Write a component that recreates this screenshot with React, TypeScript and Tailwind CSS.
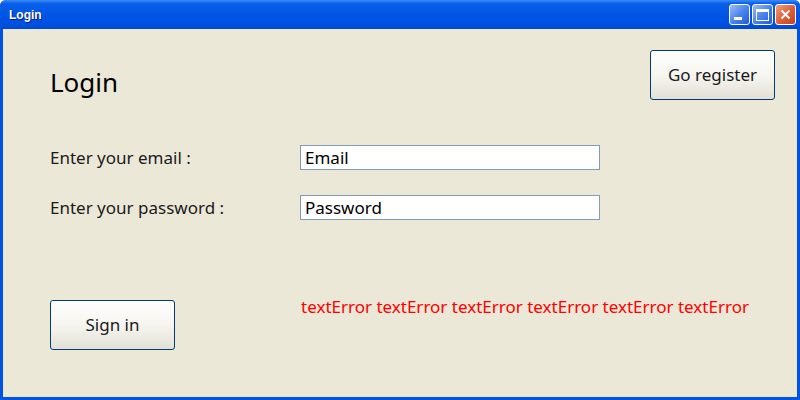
import React from 'react'

const fieldFont = { fontFamily: '"Noto Sans", "Open Sans", sans-serif' }

const XpButton = ({ label }: { label: string }) => (
  <button className="w-[125px] h-[50px] rounded-[3px] border border-[#003C74] bg-gradient-to-b from-white via-[#F6F5F0] to-[#E3E1D6] text-[17px] text-[#1b1b1b]">
    {label}
  </button>
)

const TitleButton = ({ kind }: { kind: 'min' | 'max' | 'close' }) => {
  const bg =
    kind === 'close'
      ? 'bg-gradient-to-br from-[#F0A080] via-[#E0603A] to-[#C9401D]'
      : 'bg-gradient-to-br from-[#9DBDF8] via-[#4C84EE] to-[#2458D6]'
  return (
    <div className={`w-[21px] h-[21px] rounded-[3px] border border-white flex items-center justify-center ${bg}`}>
      {kind === 'min' && <div className="w-[8px] h-[3px] bg-white mt-[8px] -ml-[3px]" />}
      {kind === 'max' && <div className="w-[13px] h-[12px] border border-white border-t-[3px]" />}
      {kind === 'close' && (
        <svg width="11" height="11" viewBox="0 0 11 11">
          <path d="M1.5 1.5 L9.5 9.5 M9.5 1.5 L1.5 9.5" stroke="white" strokeWidth="2" />
        </svg>
      )}
    </div>
  )
}

export default function App() {
  return (
    <div className="w-[800px] h-[400px] bg-[#0054E3] flex flex-col rounded-t-[6px] overflow-hidden" style={fieldFont}>
      <div className="h-[29px] shrink-0 flex items-center justify-between pl-[9px] pr-[4px] bg-[linear-gradient(to_bottom,#3A8CF8_0%,#0A5FE8_12%,#0055E5_50%,#0050E0_85%,#0048D0_100%)]">
        <span
          className="text-white text-[12px] font-bold [text-shadow:1px_1px_0_#0A1883]"
          style={{ fontFamily: '"Liberation Sans", Arial, sans-serif' }}
        >
          Login
        </span>
        <div className="flex gap-[2px] items-center">
          <TitleButton kind="min" />
          <TitleButton kind="max" />
          <TitleButton kind="close" />
        </div>
      </div>

      <div className="flex-1 mx-[3px] mb-[3px] bg-[#EBE8D8] pl-[47px] pr-[22px]">
        <div className="flex justify-between items-start pt-[21px]">
          <h1 className="text-[26px] text-black mt-[16px] leading-[32px]">Login</h1>
          <XpButton label="Go register" />
        </div>

        <div className="mt-[45px] flex flex-col gap-[25px]">
          <div className="flex items-center h-[25px]">
            <span className="w-[250px] text-[17px] text-[#1b1b1b]">Enter your email :</span>
            <input
              className="w-[300px] h-[25px] border border-[#7F9DB9] bg-white px-[4px] text-[17px] text-black outline-none"
              defaultValue="Email"
            />
          </div>
          <div className="flex items-center h-[25px]">
            <span className="w-[250px] text-[17px] text-[#1b1b1b]">Enter your password :</span>
            <input
              className="w-[300px] h-[25px] border border-[#7F9DB9] bg-white px-[4px] text-[17px] text-black outline-none"
              defaultValue="Password"
            />
          </div>
        </div>

        <div className="mt-[80px] flex items-start">
          <XpButton label="Sign in" />
          <span className="ml-[126px] -mt-[4px] text-[17px] leading-[22px] text-[#FF0000]">
            textError textError textError textError textError textError
          </span>
        </div>
      </div>
    </div>
  )
}
